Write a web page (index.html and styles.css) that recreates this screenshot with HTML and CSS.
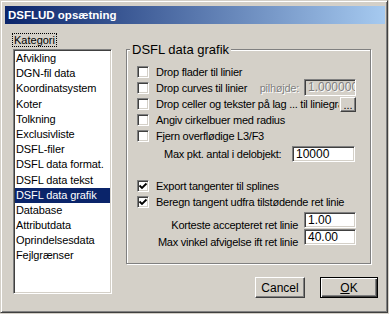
FILE: index.html
```html
<!DOCTYPE html>
<html lang="da">
<head>
    <meta charset="UTF-8">
    <title>DSFLUD opsætning</title>
    <link rel="stylesheet" href="styles.css">
</head>
<body>

    <div class="window">
        <div class="titlebar">DSFLUD opsætning</div>
        <div class="client">
            <div class="left">
                <div class="cat-label"><span class="focus">Kategori</span></div>
                <ul class="listbox">
                    <li>Afvikling</li>
                    <li>DGN-fil data</li>
                    <li>Koordinatsystem</li>
                    <li>Koter</li>
                    <li>Tolkning</li>
                    <li>Exclusivliste</li>
                    <li>DSFL-filer</li>
                    <li>DSFL data format.</li>
                    <li>DSFL data tekst</li>
                    <li class="selected">DSFL data grafik</li>
                    <li>Database</li>
                    <li>Attributdata</li>
                    <li>Oprindelsesdata</li>
                    <li>Fejlgrænser</li>
                </ul>
            </div>

            <div class="right">
                <fieldset class="group">
                    <legend>DSFL data grafik</legend>
                    <div class="opts">
                        <div class="check-row">
                            <span class="box"></span>
                            <span class="text">Drop flader til linier</span>
                        </div>
                        <div class="check-row">
                            <span class="box"></span>
                            <span class="text">Drop curves til linier</span>
                            <span class="disabled-label">pilhøjde:</span>
                            <span class="edit disabled pil">1.000000</span>
                        </div>
                        <div class="check-row">
                            <span class="box"></span>
                            <span class="text clip">Drop celler og tekster på lag ... til liniegrafik</span>
                            <button class="dots">...</button>
                        </div>
                        <div class="check-row">
                            <span class="box"></span>
                            <span class="text">Angiv cirkelbuer med radius</span>
                        </div>
                        <div class="check-row">
                            <span class="box"></span>
                            <span class="text">Fjern overflødige L3/F3</span>
                        </div>
                        <div class="field-row maxpkt">
                            <span class="label">Max pkt. antal i delobjekt:</span>
                            <span class="edit wide">10000</span>
                        </div>

                        <div class="check-row spaced">
                            <span class="box checked">
                                <svg width="10" height="10" viewBox="0 0 10 10"><path d="M1.5 4.5 L4 7 L8.5 2.5" fill="none" stroke="#000" stroke-width="1.8"/></svg>
                            </span>
                            <span class="text">Export tangenter til splines</span>
                        </div>
                        <div class="check-row">
                            <span class="box checked">
                                <svg width="10" height="10" viewBox="0 0 10 10"><path d="M1.5 4.5 L4 7 L8.5 2.5" fill="none" stroke="#000" stroke-width="1.8"/></svg>
                            </span>
                            <span class="text">Beregn tangent udfra tilstødende ret linie</span>
                        </div>
                        <div class="field-row first">
                            <span class="label right">Korteste accepteret ret linie</span>
                            <span class="edit">1.00</span>
                        </div>
                        <div class="field-row">
                            <span class="label right">Max vinkel afvigelse ift ret linie</span>
                            <span class="edit">40.00</span>
                        </div>
                    </div>
                </fieldset>

                <div class="buttons">
                    <button class="btn cancel">Cancel</button>
                    <button class="btn ok"><u>O</u>K</button>
                </div>
            </div>
        </div>
    </div>

</body>
</html>
```

FILE: styles.css
```css
body {
    margin: 0;
    background-color: #d4d0c8;
    font-family: "Liberation Sans", Arial, sans-serif;
    font-size: 11px;
    color: #000;
}

.window {
    width: 388px;
    height: 313px;
    box-sizing: border-box;
    border: 1px solid;
    border-color: #d4d0c8 #404040 #404040 #d4d0c8;
    box-shadow: inset 1px 1px #fff, inset -1px -1px #808080;
    padding: 5px 2px 2px 4px;
    background-color: #d4d0c8;
    display: flex;
    flex-direction: column;
}

.titlebar {
    height: 18px;
    line-height: 18px;
    padding-left: 3px;
    background: linear-gradient(to right, #0a246a, #a6caf0);
    color: #fff;
    font-weight: bold;
    font-size: 11.5px;
}

.client {
    flex: 1;
    display: flex;
    gap: 14px;
    padding: 9px 0 0 8px;
}

/* left column */

.left {
    width: 99px;
    display: flex;
    flex-direction: column;
}

.cat-label {
    height: 14px;
    margin-bottom: 2px;
}

.focus {
    display: inline-block;
    margin-left: -1px;
    padding: 0 1px;
    line-height: 12px;
    border: 1px dotted #000;
}

.listbox {
    height: 245px;
    box-sizing: border-box;
    margin: 0;
    padding: 1px 0 0 0;
    list-style: none;
    background-color: #fff;
    border: 1px solid;
    border-color: #808080 #fff #fff #808080;
    box-shadow: inset 1px 1px #404040, inset -1px -1px #d4d0c8;
}

.listbox li {
    height: 15.2px;
    line-height: 15.2px;
    margin: 0 1px;
    padding-left: 1px;
    white-space: nowrap;
    letter-spacing: -0.1px;
}

.listbox li.selected {
    background-color: #0a246a;
    color: #fff;
}

/* right column */

.right {
    width: 252px;
    margin-top: 10px;
    display: flex;
    flex-direction: column;
}

.group {
    width: 245px;
    min-width: 0;
    height: 221px;
    box-sizing: border-box;
    margin: 0;
    padding: 0 0 0 10px;
    border: 1px solid #808080;
    box-shadow: inset 1px 1px #fff, 1px 1px #fff;
}

.group legend {
    margin-left: -7px;
    padding: 0 2px;
    line-height: 13px;
    font-size: 13px;
    background-color: #d4d0c8;
}

.opts {
    margin-top: 7.5px;
    padding-right: 14px;
    min-width: 0;
    letter-spacing: -0.25px;
    display: flex;
    flex-direction: column;
}

.check-row {
    height: 16.2px;
    min-width: 0;
    display: flex;
    align-items: center;
}

.check-row.spaced {
    margin-top: 15px;
}

.box {
    width: 12px;
    height: 12px;
    box-sizing: border-box;
    flex: none;
    margin-right: 7px;
    background-color: #fff;
    border: 1px solid;
    border-color: #808080 #fff #fff #808080;
    box-shadow: inset 1px 1px #404040, inset -1px -1px #d4d0c8;
    display: flex;
    align-items: center;
    justify-content: center;
}

.text {
    white-space: nowrap;
}

.text.clip {
    flex: 1;
    min-width: 0;
    overflow: hidden;
}

.disabled-label {
    margin-left: auto;
    margin-right: 5px;
    color: #808080;
    text-shadow: 1px 1px #fff;
}

.edit {
    width: 52px;
    height: 16px;
    box-sizing: border-box;
    flex: none;
    padding: 0 3px;
    line-height: 14px;
    font-size: 12px;
    letter-spacing: 0;
    white-space: nowrap;
    overflow: hidden;
    background-color: #fff;
    border: 1px solid;
    border-color: #808080 #fff #fff #808080;
    box-shadow: inset 1px 1px #404040, inset -1px -1px #d4d0c8;
}

.edit.disabled {
    background-color: #d4d0c8;
    color: #808080;
    text-shadow: 1px 1px #fff;
}

.edit.pil {
    height: 17px;
    line-height: 15px;
}

.edit.wide {
    width: 63px;
    margin-right: 1px;
}

.dots {
    width: 16px;
    height: 15px;
    margin: 2px 0 0 1px;
    padding: 0;
    flex: none;
    font-family: inherit;
    font-size: 11px;
    line-height: 10px;
    background-color: #d4d0c8;
    border: 1px solid;
    border-color: #fff #404040 #404040 #fff;
    box-shadow: inset -1px -1px #808080;
}

.field-row {
    height: 17px;
    display: flex;
    align-items: center;
}

.field-row.maxpkt {
    margin-top: 1px;
    padding-left: 27px;
}

.field-row.first {
    margin-top: 2px;
}

.label {
    flex: 1;
    white-space: nowrap;
}

.label.right {
    text-align: right;
    padding-right: 6px;
}

.buttons {
    margin-top: 13px;
    display: flex;
    justify-content: flex-end;
    gap: 15px;
}

.btn {
    height: 21px;
    padding: 0;
    font-family: inherit;
    font-size: 12px;
    background-color: #d4d0c8;
    color: #000;
}

.btn.cancel {
    width: 50px;
    border: 1px solid;
    border-color: #fff #404040 #404040 #fff;
    box-shadow: inset -1px -1px #808080;
}

.btn.ok {
    width: 58px;
    border: 1px solid #000;
    box-shadow: inset 1px 1px #fff, inset -1px -1px #404040, inset -2px -2px #808080;
}
```
